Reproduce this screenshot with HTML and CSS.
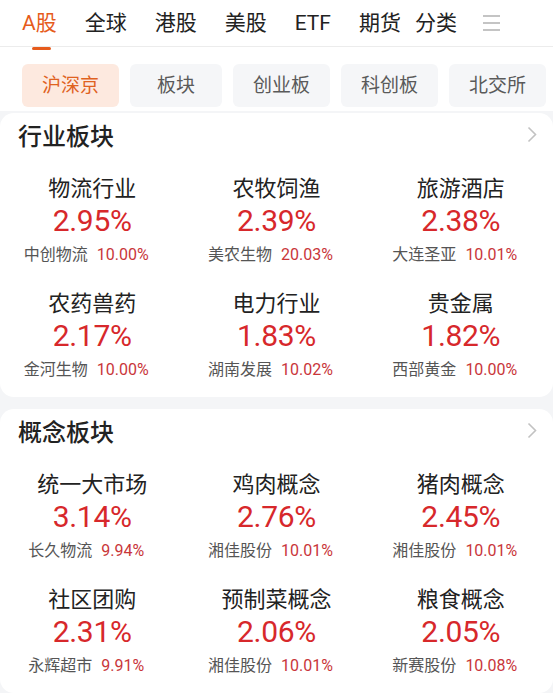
FILE: index.html
```html
<!DOCTYPE html>
<html lang="zh-CN">
<head>
    <meta charset="UTF-8">
    <meta name="viewport" content="width=device-width, initial-scale=1.0">
    <title>A股 行情</title>
    <link rel="stylesheet" href="styles.css">
</head>
<body>
    <header class="top">
        <nav class="tabs">
            <div class="tab-list">
                <a class="tab active">A股</a>
                <a class="tab">全球</a>
                <a class="tab">港股</a>
                <a class="tab">美股</a>
                <a class="tab">ETF</a>
                <a class="tab">期货</a>
            </div>
            <div class="tab-more">
                <a class="tab">分类</a>
                <svg class="menu-icon" width="17" height="18" viewBox="0 0 17 18">
                    <path d="M0 2h17M0 9h17M0 16h17" stroke="#c4c4c4" stroke-width="2" fill="none"/>
                </svg>
            </div>
        </nav>
        <div class="pills">
            <span class="pill active">沪深京</span>
            <span class="pill">板块</span>
            <span class="pill">创业板</span>
            <span class="pill">科创板</span>
            <span class="pill">北交所</span>
        </div>
    </header>

    <section class="card">
        <div class="card-head">
            <h2>行业板块</h2>
            <svg class="chevron" width="10" height="17" viewBox="0 0 10 17">
                <path d="M1.5 1.5l7 7-7 7" stroke="#c2c2c2" stroke-width="1.6" fill="none"/>
            </svg>
        </div>
        <div class="grid">
            <div class="item">
                <div class="name">物流行业</div>
                <div class="pct">2.95%</div>
                <div class="sub"><span>中创物流</span><em>10.00%</em></div>
            </div>
            <div class="item">
                <div class="name">农牧饲渔</div>
                <div class="pct">2.39%</div>
                <div class="sub"><span>美农生物</span><em>20.03%</em></div>
            </div>
            <div class="item">
                <div class="name">旅游酒店</div>
                <div class="pct">2.38%</div>
                <div class="sub"><span>大连圣亚</span><em>10.01%</em></div>
            </div>
            <div class="item">
                <div class="name">农药兽药</div>
                <div class="pct">2.17%</div>
                <div class="sub"><span>金河生物</span><em>10.00%</em></div>
            </div>
            <div class="item">
                <div class="name">电力行业</div>
                <div class="pct">1.83%</div>
                <div class="sub"><span>湖南发展</span><em>10.02%</em></div>
            </div>
            <div class="item">
                <div class="name">贵金属</div>
                <div class="pct">1.82%</div>
                <div class="sub"><span>西部黄金</span><em>10.00%</em></div>
            </div>
        </div>
    </section>

    <section class="card">
        <div class="card-head">
            <h2>概念板块</h2>
            <svg class="chevron" width="10" height="17" viewBox="0 0 10 17">
                <path d="M1.5 1.5l7 7-7 7" stroke="#c2c2c2" stroke-width="1.6" fill="none"/>
            </svg>
        </div>
        <div class="grid">
            <div class="item">
                <div class="name">统一大市场</div>
                <div class="pct">3.14%</div>
                <div class="sub"><span>长久物流</span><em>9.94%</em></div>
            </div>
            <div class="item">
                <div class="name">鸡肉概念</div>
                <div class="pct">2.76%</div>
                <div class="sub"><span>湘佳股份</span><em>10.01%</em></div>
            </div>
            <div class="item">
                <div class="name">猪肉概念</div>
                <div class="pct">2.45%</div>
                <div class="sub"><span>湘佳股份</span><em>10.01%</em></div>
            </div>
            <div class="item">
                <div class="name">社区团购</div>
                <div class="pct">2.31%</div>
                <div class="sub"><span>永辉超市</span><em>9.91%</em></div>
            </div>
            <div class="item">
                <div class="name">预制菜概念</div>
                <div class="pct">2.06%</div>
                <div class="sub"><span>湘佳股份</span><em>10.01%</em></div>
            </div>
            <div class="item">
                <div class="name">粮食概念</div>
                <div class="pct">2.05%</div>
                <div class="sub"><span>新赛股份</span><em>10.08%</em></div>
            </div>
        </div>
    </section>
</body>
</html>
```

FILE: styles.css
```css
body {
    font-family: Roboto, "Noto Sans CJK SC", sans-serif;
    background-color: #f4f5f7;
    margin: 0;
    overflow: hidden;
    color: #222;
}

.top {
    background: #fff;
    padding-bottom: 4px;
}

.tabs {
    display: flex;
    align-items: center;
    height: 46px;
    border-bottom: 1px solid #ececec;
}

.tab-list {
    display: flex;
    gap: 28px;
    padding-left: 22px;
}

.tab {
    position: relative;
    font-size: 21px;
    line-height: 34px;
    color: #222;
    white-space: nowrap;
}

.tab.active {
    color: #e65b1c;
}

.tab.active::after {
    content: "";
    position: absolute;
    left: 10px;
    bottom: -10px;
    width: 19px;
    height: 3px;
    border-radius: 2px;
    background: #e65b1c;
}

.tab-more {
    display: flex;
    align-items: center;
    gap: 26px;
    margin-left: 14px;
}

.menu-icon {
    display: block;
}

.pills {
    display: flex;
    gap: 11px;
    padding: 17px 0 0 22px;
    height: 43px;
    overflow: hidden;
    white-space: nowrap;
}

.pill {
    flex-shrink: 0;
    min-width: 92px;
    padding: 0 20px;
    box-sizing: border-box;
    height: 43px;
    line-height: 43px;
    text-align: center;
    border-radius: 6px;
    background: #f5f6f8;
    color: #5a5a5a;
    font-size: 19px;
}

.pill.active {
    background: #fde9df;
    color: #e0621f;
}

.card {
    background: #fff;
    border-radius: 14px;
    padding: 6px 0 16px;
    margin-top: 2px;
    margin-bottom: 12px;
}

.card-head {
    display: flex;
    align-items: center;
    justify-content: space-between;
    padding: 0 16px 0 18px;
    height: 30px;
}

.card-head h2 {
    margin: 0;
    font-size: 24px;
    font-weight: 500;
    color: #222;
}

.grid {
    display: grid;
    grid-template-columns: repeat(3, 1fr);
    row-gap: 24px;
    margin-top: 26px;
}

.item {
    text-align: center;
}

.name {
    font-size: 22px;
    line-height: 28px;
    color: #222;
}

.pct {
    font-size: 30px;
    line-height: 36px;
    color: #d7282b;
    letter-spacing: -0.3px;
}

.sub {
    margin-top: 5px;
    padding-right: 12px;
    font-size: 16px;
    line-height: 22px;
    color: #555;
}

.sub em {
    font-style: normal;
    color: #c9363a;
    margin-left: 9px;
}
```
